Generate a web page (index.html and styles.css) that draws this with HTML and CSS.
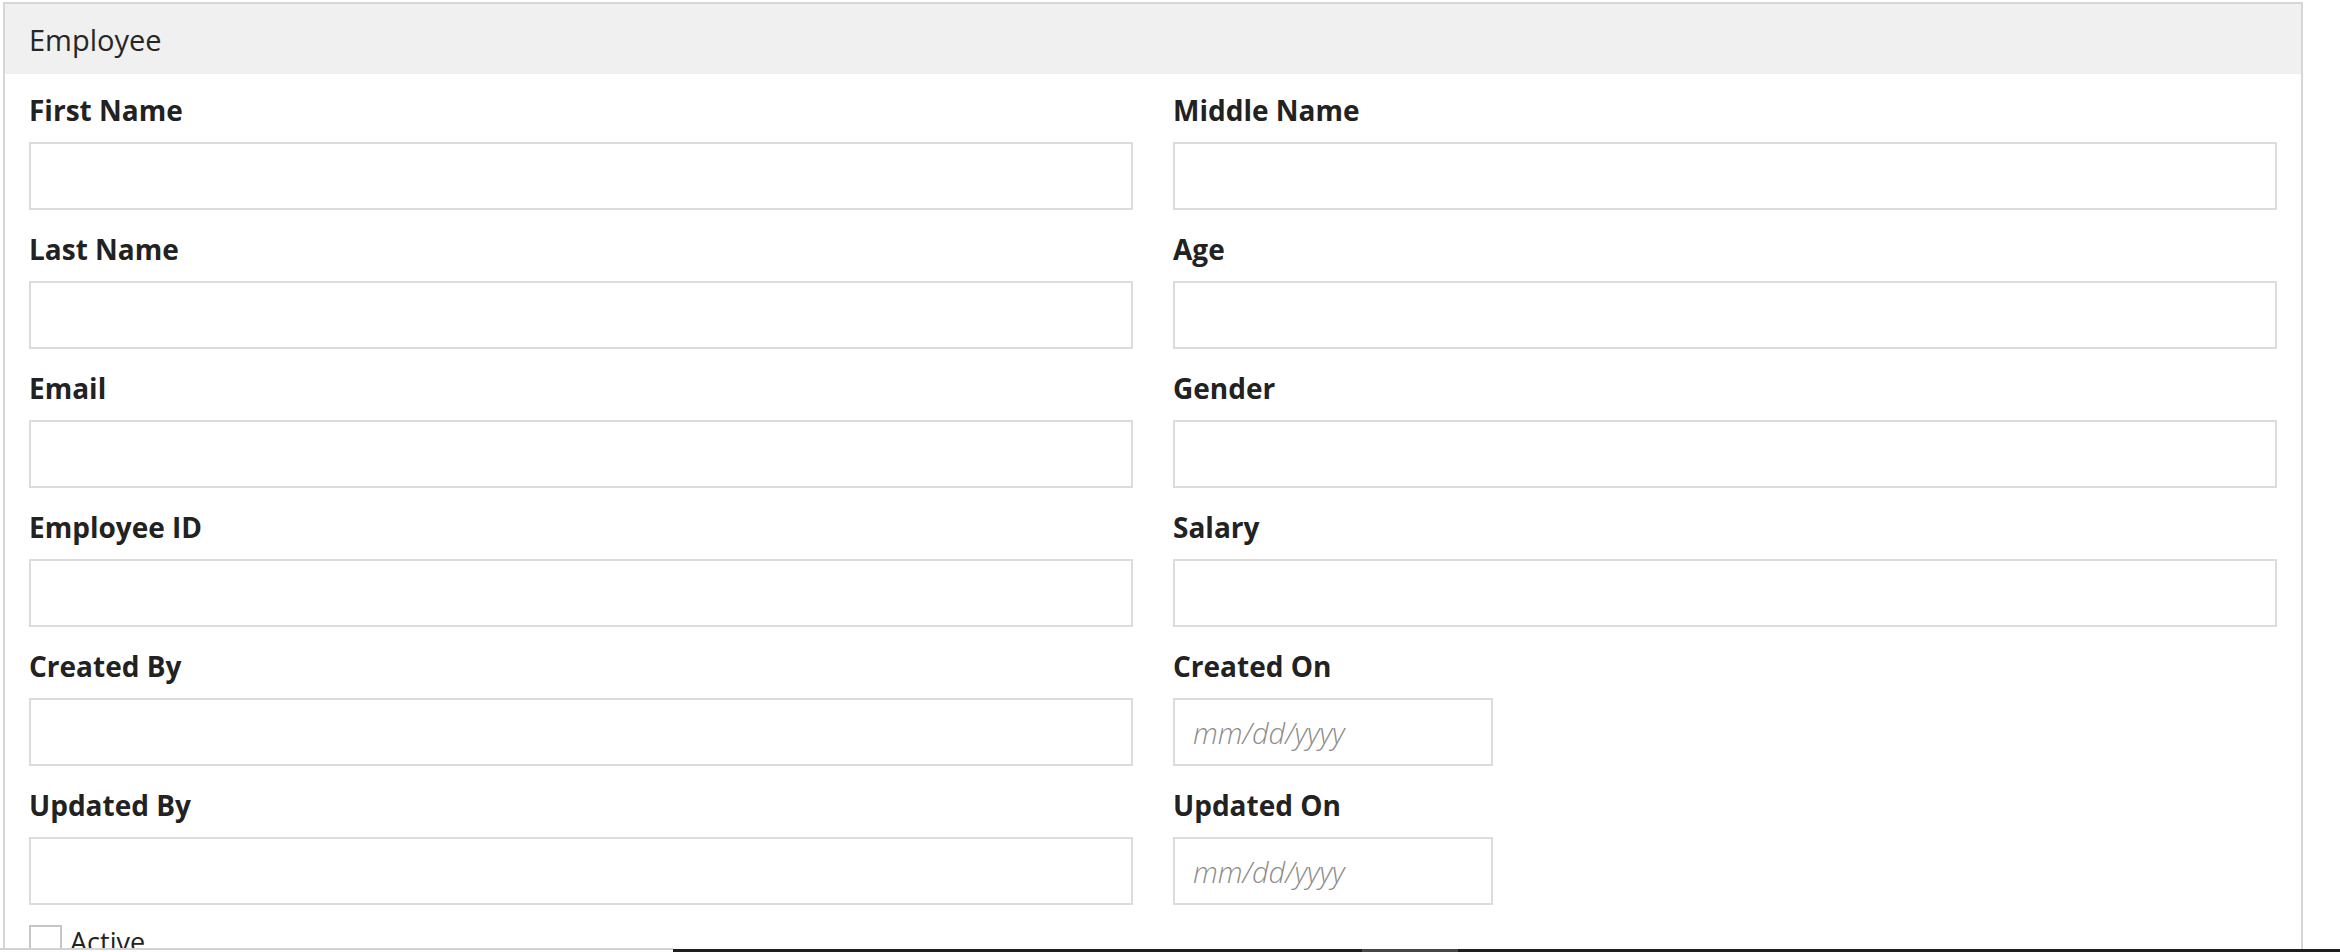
FILE: index.html
```
<!DOCTYPE html>
<html lang="en">
<head>
<meta charset="utf-8">
<title>Employee</title>
<link rel="stylesheet" href="styles.css">
</head>
<body>
<div class="page">
  <section class="panel">
    <header class="panel-head">Employee</header>
    <div class="panel-body">
      <div class="grid">
        <div class="field"><label class="lbl">First Name</label><input class="inp" type="text"></div>
        <div class="field"><label class="lbl">Middle Name</label><input class="inp" type="text"></div>
        <div class="field"><label class="lbl">Last Name</label><input class="inp" type="text"></div>
        <div class="field"><label class="lbl">Age</label><input class="inp" type="text"></div>
        <div class="field"><label class="lbl">Email</label><input class="inp" type="text"></div>
        <div class="field"><label class="lbl">Gender</label><input class="inp" type="text"></div>
        <div class="field"><label class="lbl">Employee ID</label><input class="inp" type="text"></div>
        <div class="field"><label class="lbl">Salary</label><input class="inp" type="text"></div>
        <div class="field"><label class="lbl">Created By</label><input class="inp" type="text"></div>
        <div class="field"><label class="lbl">Created On</label><input class="inp date" type="text" placeholder="mm/dd/yyyy"></div>
        <div class="field"><label class="lbl">Updated By</label><input class="inp" type="text"></div>
        <div class="field"><label class="lbl">Updated On</label><input class="inp date" type="text" placeholder="mm/dd/yyyy"></div>
      </div>
      <label class="check"><input class="box" type="checkbox"><span class="check-text">Active</span></label>
    </div>
  </section>
</div>
<div class="bottom-strip">
  <div class="strip-left"></div>
  <div class="strip-right"><div class="strip-seg"></div></div>
</div>
</body>
</html>
```
FILE: styles.css
```
html, body {
  margin: 0;
  padding: 0;
  overflow: hidden;
  background: #ffffff;
  font-family: "Open Sans", "Noto Sans", "Liberation Sans", sans-serif;
  color: #222222;
}

.page {
  padding: 2px 0 0 3px;
}

.panel {
  box-sizing: border-box;
  width: 2300px;
  border: 2px solid #d6d6d6;
  background: #ffffff;
}

.panel-head {
  height: 70px;
  display: flex;
  align-items: center;
  padding-left: 24px;
  background: #f0f0f0;
  font-size: 29px;
  font-weight: 400;
  color: #262626;
}

.panel-body {
  padding: 17px 24px 40px 24px;
}

.grid {
  display: grid;
  grid-template-columns: 1fr 1fr;
  column-gap: 40px;
}

.field {
  display: flex;
  flex-direction: column;
  align-items: flex-start;
  padding-bottom: 20px;
}

.lbl {
  font-size: 28px;
  line-height: 38px;
  font-weight: 700;
  color: #222222;
  margin-bottom: 13px;
}

.inp {
  box-sizing: border-box;
  width: 100%;
  height: 68px;
  margin: 0;
  border: 2px solid #dcdcdc;
  border-radius: 0;
  background: #ffffff;
  padding: 0 18px;
  font-family: "Open Sans", "Noto Sans", sans-serif;
  font-size: 29px;
  outline: none;
}

.inp.date {
  width: 320px;
}

.inp::placeholder {
  color: #8c8c8c;
  font-style: italic;
  font-weight: 300;
}

.check {
  display: flex;
  align-items: center;
  gap: 8px;
  margin-top: -2px;
}

.box {
  appearance: none;
  -webkit-appearance: none;
  box-sizing: border-box;
  width: 33px;
  height: 33px;
  margin: 0;
  border: 2px solid #c6c6c6;
  background: #ffffff;
}

.check-text {
  font-size: 27px;
  font-weight: 400;
  color: #222222;
}

.bottom-strip {
  position: fixed;
  left: 0;
  right: 0;
  top: 948px;
  height: 4px;
  display: flex;
}

.strip-left {
  width: 673px;
  border-top: 2px solid #d2d2d2;
  background: #ffffff;
}

.strip-right {
  flex: 1;
  margin-top: 1px;
  background: #1e1e1e;
  display: flex;
}

.strip-seg {
  margin-left: 689px;
  width: 96px;
  background: #474747;
}
```
